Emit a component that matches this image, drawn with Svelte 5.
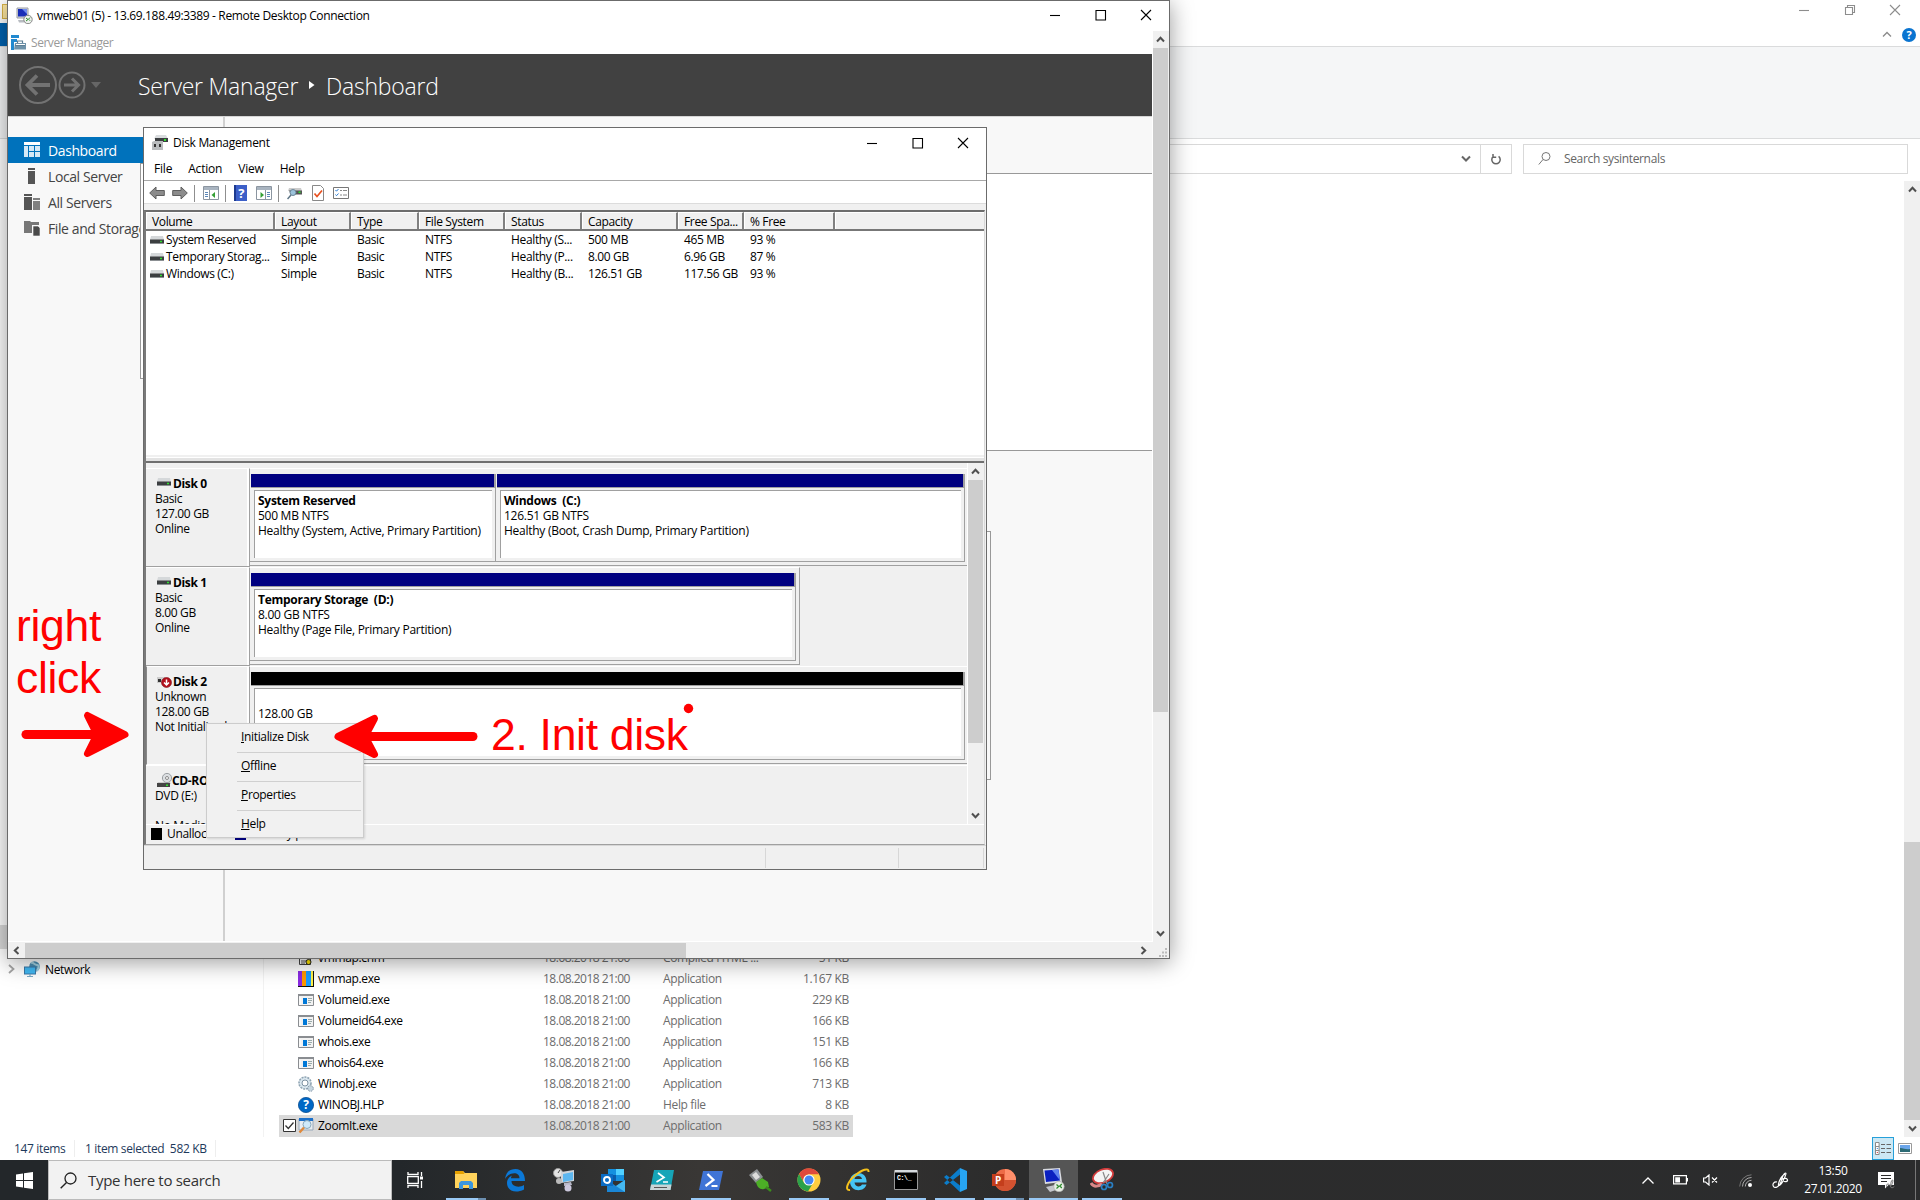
<script>
  const sideItems = ['Dashboard', 'Local Server', 'All Servers', 'File and Storage'];
  const columns = ['Volume', 'Layout', 'Type', 'File System', 'Status', 'Capacity', 'Free Spa...', '% Free', ''];
  const volumes = [
    ['System Reserved', 'Simple', 'Basic', 'NTFS', 'Healthy (S...', '500 MB', '465 MB', '93 %'],
    ['Temporary Storag...', 'Simple', 'Basic', 'NTFS', 'Healthy (P...', '8.00 GB', '6.96 GB', '87 %'],
    ['Windows (C:)', 'Simple', 'Basic', 'NTFS', 'Healthy (B...', '126.51 GB', '117.56 GB', '93 %'],
  ];
  const disks = [
    {
      name: 'Disk 0', icon: 'disk', lines: ['Basic', '127.00 GB', 'Online'],
      parts: [
        { w: 246, title: 'System Reserved', lines: ['500 MB NTFS', 'Healthy (System, Active, Primary Partition)'] },
        { w: 469, title: 'Windows\u00a0 (C:)', lines: ['126.51 GB NTFS', 'Healthy (Boot, Crash Dump, Primary Partition)'] },
      ],
    },
    {
      name: 'Disk 1', icon: 'disk', lines: ['Basic', '8.00 GB', 'Online'], short: true,
      parts: [{ w: 546, title: 'Temporary Storage\u00a0 (D:)', lines: ['8.00 GB NTFS', 'Healthy (Page File, Primary Partition)'] }],
    },
    {
      name: 'Disk 2', icon: 'offline', lines: ['Unknown', '128.00 GB', 'Not Initialized'], selected: true,
      parts: [{ w: 715, title: '\u00a0', lines: ['128.00 GB'], black: true }],
    },
  ];
  const menuItems = ['Initialize Disk', 'Offline', 'Properties', 'Help'];
  const files = [
    ['chm', 'vmmap.chm', 'Compiled HTML ...', '51 KB'],
    ['vmmap', 'vmmap.exe', 'Application', '1.167 KB'],
    ['app', 'Volumeid.exe', 'Application', '229 KB'],
    ['app', 'Volumeid64.exe', 'Application', '166 KB'],
    ['app', 'whois.exe', 'Application', '151 KB'],
    ['app', 'whois64.exe', 'Application', '166 KB'],
    ['gear', 'Winobj.exe', 'Application', '713 KB'],
    ['help', 'WINOBJ.HLP', 'Help file', '8 KB'],
    ['zoom', 'ZoomIt.exe', 'Application', '583 KB'],
  ];
  const tasks = [
    { id: 'explorer', run: 'multi' }, { id: 'edge' }, { id: 'putty' }, { id: 'outlook' }, { id: 'ise' },
    { id: 'ps', run: 'one' }, { id: 'plug' }, { id: 'chrome', run: 'one' }, { id: 'ie' },
    { id: 'cmd', run: 'one' }, { id: 'code', run: 'one' }, { id: 'ppt', run: 'multi' },
    { id: 'rdp', run: 'active' }, { id: 'snip', run: 'one' },
  ];
</script>

{#snippet chev(dir)}
  <svg class="chev {dir}" viewBox="0 0 9 7" width="9" height="7"><path d="M1 5.5 4.5 1.8 8 5.5" fill="none" stroke="#505050" stroke-width="2" /></svg>
{/snippet}

{#snippet winButtons(cls)}
  <div class="winbtns {cls}">
    <svg width="12" height="12" viewBox="0 0 12 12"><path d="M1 6.5h10" /></svg>
    {#if cls === 'dim'}
      <svg width="12" height="12" viewBox="0 0 12 12"><path d="M1.5 3.5h7v7h-7zM3.500 3.500v-2h7v7h-2" /></svg>
    {:else}
      <svg width="12" height="12" viewBox="0 0 12 12"><path d="M1 1.500h9.500v9.500h-9.500z" /></svg>
    {/if}
    <svg width="12" height="12" viewBox="0 0 12 12"><path d="M1 1l10 10M11 1L1 11" /></svg>
  </div>
{/snippet}

{#snippet diskIcon()}
  <svg width="14" height="8" viewBox="0 0 14 8"><path d="M1 0h12l1 4H0z" fill="#d5d8da" /><path d="M0 3.500h14V8H0z" fill="#3c3f41" /><path d="M0 7h14v1H0z" fill="#8b8f92" /><path d="M10 4.700h2v1.600h-2z" fill="#2fe02f" /></svg>
{/snippet}

<div class="desktop">
  <!-- File Explorer -->
  <section class="explorer">
    <div class="ex-title"><span class="folder"></span>{@render winButtons('dim')}</div>
    <div class="ex-tabs">
      <span class="file-tab"></span>
      <svg class="collapse" width="10" height="7" viewBox="0 0 10 7"><path d="M1 5.500l4-4 4 4" fill="none" stroke="#8a8a8a" stroke-width="1.300" /></svg>
      <span class="helpdot">?</span>
    </div>
    <div class="ribbon"></div>
    <div class="addrbar">
      <div class="addr">
        <svg class="drop" width="10" height="8" viewBox="0 0 10 8"><path d="M1 1.500l4 4 4-4" fill="none" stroke="#666" stroke-width="2" /></svg>
        <span class="refresh"><svg width="12" height="13" viewBox="0 0 12 13"><path d="M8.600 3.300A4.200 4.200 0 1 1 3.400 3.300M3 1v3.200h3.200" fill="none" stroke="#666" stroke-width="1.500" /></svg></span>
      </div>
      <div class="search">
        <svg width="14" height="15" viewBox="0 0 14 15"><circle cx="8" cy="5.500" r="4" fill="none" stroke="#777" /><path d="M5 8.500L.8 13.500" stroke="#777" /></svg>
        <span>Search sysinternals</span>
      </div>
    </div>
    <div class="ex-body">
      <nav class="tree">
        <div class="tree-sel"></div>
        <div class="net">
          <svg width="7" height="10" viewBox="0 0 7 10"><path d="M1 1l4.500 4L1 9" fill="none" stroke="#a5a5a5" stroke-width="1.800" /></svg>
          <svg class="neticon" width="16" height="16" viewBox="0 0 16 16"><circle cx="10.500" cy="5.500" r="5.300" fill="#4c8fb4" /><path d="M7 2c3-1 3 2 6 2s1 4 0 6" stroke="#a7d3e2" stroke-width="2" fill="none" /><path d="M0 5.500h12v8H0z" fill="#3b79a8" /><path d="M1 6.500h10v6H1z" fill="#42baf5" /><path d="M3 15.500h6M6 13v2" stroke="#7aa9c4" stroke-width="1.200" /></svg>
          <span>Network</span>
        </div>
      </nav>
      <div class="files">
        {#each files as [icon, name, type, size], i}
          <div class="file" class:sel={i === 8}>
            <span class="check">
              {#if i === 8}<svg width="13" height="13" viewBox="0 0 13 13"><path d="M.5.5h12v12H.5z" fill="#fff" stroke="#333" /><path d="M2.500 6.500l2.800 3L10.500 3.500" fill="none" stroke="#333" stroke-width="1.300" /></svg>{/if}
            </span>
            <svg class="ficon" width="16" height="16" viewBox="0 0 16 16">
              {#if icon === 'vmmap'}
                <path d="M0 0h16v16H0z" fill="#111" /><path d="M0 0h4v15H0z" fill="#8a2be2" /><path d="M4 0h4v15H4z" fill="#ff9800" /><path d="M8 0h5v15H8z" fill="#1a9cff" /><path d="M13 0h2v15h-2z" fill="#fff34a" />
              {:else if icon === 'app'}
                <path d="M.5 2.500h15v11H.5z" fill="#f2f2f2" stroke="#8a8d91" /><path d="M0 2h16v2H0z" fill="#8a8d91" /><path d="M5 6h4v6H5z" fill="#0078d7" /><path d="M10 6.500h4M10 8.500h4M10 10.500h3" stroke="#9aa" /><path d="M2 5v8" stroke="#fff" />
              {:else if icon === 'gear'}
                <circle cx="7" cy="7" r="6" fill="#d9e6ee" stroke="#8ea3b2" stroke-width="1.600" stroke-dasharray="2 1" /><circle cx="7" cy="7" r="3" fill="#fff" stroke="#7f93a3" /><circle cx="12.500" cy="12.500" r="2.800" fill="#c7d6e0" stroke="#7f93a3" stroke-dasharray="1.500 1" />
              {:else if icon === 'help'}
                <circle cx="8" cy="8" r="7.600" fill="#0067c5" stroke="#0a4f93" stroke-width=".8" /><text x="8" y="12.200" text-anchor="middle" font-size="12" font-weight="700" fill="#fff">?</text>
              {:else if icon === 'zoom'}
                <path d="M1 1h14v11H1z" fill="#e9eef2" stroke="#9ab" /><path d="M1 0h14v3H1z" fill="#1d70c9" /><circle cx="9" cy="6.500" r="4" fill="#cfeafa" stroke="#8aa9bb" /><path d="M6 9.500L1.500 14.500" stroke="#e08a3c" stroke-width="2.400" />
              {:else}
                <path d="M1.500.5h11v14h-11z" fill="#fff" stroke="#444" /><path d="M3 11h5M3 13h4" stroke="#555" /><circle cx="10.500" cy="12" r="2.500" fill="#ffe600" stroke="#222" />
              {/if}
            </svg>
            <span class="fname">{name}</span>
            <span class="fdate">18.08.2018 21:00</span>
            <span class="ftype">{type}</span>
            <span class="fsize">{size}</span>
          </div>
        {/each}
      </div>
      <div class="vscroll ex-scroll">
        <span class="sbtn">{@render chev('up')}</span>
        <span class="track-top"></span>
        <span class="thumb"></span>
        <span class="sbtn">{@render chev('down')}</span>
      </div>
    </div>
    <footer class="ex-status">
      <span class="cnt">147 items</span>
      <span class="selcnt">1 item selected&nbsp; 582 KB</span>
      <span class="views">
        <span class="view-on"><svg width="16" height="13" viewBox="0 0 16 13"><path d="M.5.5h3.600v12H.5zM.5 4.500h3.600M.5 8.500h3.600" fill="#fff" stroke="#8a8a8a" /><path d="M6 2.500h4m1.500 0H16M6 6.500h4m1.500 0H16M6 10.500h4m1.500 0H16" stroke="#666" /><path d="M1.800 6h1v1h-1z" fill="#2b7cd3" /><path d="M1.800 10h1v1h-1z" fill="#c22" /></svg></span>
        <svg class="view-off" width="14" height="11" viewBox="0 0 14 11"><path d="M.5.500h13v10H.500z" fill="#fff" stroke="#9a9a9a" /><path d="M2 2h10v7H2z" fill="#6ba5ea" /><path d="M2 5c4 0 6 2 10 1v3H2z" fill="#2c6a74" /></svg>
      </span>
    </footer>
  </section>

  <!-- Remote Desktop window -->
  <section class="rdp">
    <header class="rdp-title">
      <svg width="17" height="17" viewBox="0 0 17 17"><path d="M1 1h11v10H1z" fill="#d8dbe0" stroke="#9a9da3" /><path d="M2 2h9v7.500H2z" fill="#1a2fb8" /><path d="M6 2h5v5z" fill="#6f8cf0" /><path d="M2 13h8v2.500H3z" fill="#b8bcc2" /><circle cx="12" cy="12.500" r="4.200" fill="#eef2ee" stroke="#888" /><path d="M10 11l2 1.500-2 1.500M14 10.500l-1.500 1.700 1.500 1.500" stroke="#2c8a2c" fill="none" /></svg>
      <span>vmweb01 (5) - 13.69.188.49:3389 - Remote Desktop Connection</span>
      {@render winButtons('')}
    </header>
    <div class="rdp-mid">
      <div class="remote">
        <div class="sm-title">
          <svg width="15" height="15" viewBox="0 0 15 15"><path d="M0 0h8v3H0zM0 4h6v3H3v8H0z" fill="#2189cf" /><path d="M4 8h11v6.500H3z" fill="#6f93aa" /><path d="M6.500 8V6h5v2M4 10.500h10" fill="none" stroke="#5c7e94" stroke-width="1.200" /><path d="M5 9.500h9" stroke="#fff" /></svg>
          <span>Server Manager</span>
        </div>
        <div class="sm-head">
          <svg class="nav" width="86" height="40" viewBox="0 0 86 40">
            <g fill="none" stroke="#727272"><circle cx="20" cy="20" r="18" stroke-width="2" /><circle cx="54" cy="20" r="12.500" stroke-width="2" /><path d="M32 20H10M19 10.500L9.500 20l9.500 9.500" stroke-width="3.800" /><path d="M46 20h14M54 13.500l6.500 6.500-6.500 6.500" stroke-width="3" /></g><path d="M73 17h10l-5 6z" fill="#666" />
          </svg>
          <span class="crumb">Server Manager</span>
          <svg class="tri" width="6" height="8" viewBox="0 0 6 8"><path d="M0 0l5.500 4L0 8z" fill="#fff" /></svg>
          <span class="crumb">Dashboard</span>
        </div>
        <div class="sm-body">
          <aside>
            {#each sideItems as item, i}
              <div class="side" class:on={i === 0}>
                <svg width="16" height="16" viewBox="0 0 16 16">
                  {#if i === 0}
                    <path d="M0 0h16v3H0z" fill="#fff" /><path d="M0 4h4v11H0zM5 4h5v5H5zM11 4h5v5h-5zM5 10h5v5H5zM11 10h5v5h-5z" fill="#d6e9f6" />
                  {:else if i === 1}
                    <path d="M4 0h7v2H4zM4 3h7v13H4z" fill="#555" />
                  {:else if i === 2}
                    <path d="M0 0h8v2H0zM0 3h8v13H0z" fill="#555" /><path d="M9 4h7v2H9zM9 7h7v9H9z" fill="#808080" />
                  {:else}
                    <path d="M0 1h6l1 1h8v3H8v8H0z" fill="#777" /><path d="M9 6h5l2 2v8H9z" fill="#4a4a4a" stroke="#f8f8f8" stroke-width=".6" />
                  {/if}
                </svg>
                <span>{item}</span>
              </div>
            {/each}
          </aside>
          <div class="sm-main">
            <div class="sm-band"></div>
            <div class="sm-white"></div>
            <div class="sm-rest"></div>
          </div>
          <div class="tile left"></div>
          <div class="tile right"></div>
        </div>
      </div>
      <div class="vscroll rdp-v">
        <span class="sbtn">{@render chev('up')}</span>
        <span class="thumb"></span>
        <span class="rest"></span>
        <span class="sbtn">{@render chev('down')}</span>
      </div>
    </div>
    <div class="hscroll">
      <span class="sbtn">{@render chev('lt')}</span>
      <span class="thumb"></span>
      <span class="rest"></span>
      <span class="sbtn">{@render chev('rt')}</span>
      <svg class="grip" width="10" height="10" viewBox="0 0 10 10"><path d="M7 0h2v2H7zM4 3.500h2v2H4zM7 3.500h2v2H7zM1 7h2v2H1zM4 7h2v2H4zM7 7h2v2H7z" fill="#bbb" /></svg>
    </div>
  </section>

  <!-- Disk Management window -->
  <section class="dm">
    <header class="dm-title">
      <svg width="16" height="15" viewBox="0 0 16 15"><path d="M4 0h10l2 4H2z" fill="#d9dcde" /><path d="M3 3h13v4H3z" fill="#3c3f41" /><path d="M12 4h2v2h-2z" fill="#2fe02f" /><path d="M0 7l2-1h9v9H0z" fill="#b9bcbe" /><path d="M2 9h2v3H2zM7 9h2v3H7z" fill="#333" /></svg>
      <span>Disk Management</span>
      {@render winButtons('')}
    </header>
    <div class="menubar"><span>File</span><span>Action</span><span>View</span><span>Help</span></div>
    <div class="toolbar">
      <svg width="16" height="14" viewBox="0 0 16 14"><path d="M.7 7L7 1v3.500h8.300v5H7V13z" fill="#8c8c8c" stroke="#5e5e5e" /></svg>
      <svg class="g1" width="16" height="14" viewBox="0 0 16 14"><path d="M15.300 7L9 1v3.500H.7v5H9V13z" fill="#8c8c8c" stroke="#5e5e5e" /></svg>
      <i></i>
      <svg width="16" height="14" viewBox="0 0 16 14"><path d="M.5.5h15v13H.5z" fill="#fff" stroke="#8b95a0" /><path d="M1 1h14v3H1z" fill="#a9b4c0" /><path d="M2 6.500h3M2 8.500h3M2 10.500h3" stroke="#5b87b8" /><path d="M6.500 4v9" stroke="#8b95a0" /><path d="M12 6v6L8.500 9z" fill="#35a035" /></svg>
      <i></i>
      <svg width="13" height="16" viewBox="0 0 13 16"><path d="M0 0h13v16H0z" fill="#3c5fc8" /><path d="M0 0h2v16H0z" fill="#1d3a8f" /><text x="7.300" y="12.500" text-anchor="middle" font-size="13" font-weight="700" fill="#fff">?</text></svg>
      <svg class="g2" width="16" height="14" viewBox="0 0 16 14"><path d="M.5.5h15v13H.5z" fill="#fff" stroke="#8b95a0" /><path d="M1 1h14v3H1z" fill="#a9b4c0" /><path d="M11 6.500h3M11 8.500h3M11 10.500h3" stroke="#5b87b8" /><path d="M9.500 4v9" stroke="#8b95a0" /><path d="M4.500 6v6L8 9z" fill="#35a035" /></svg>
      <i></i>
      <svg width="15" height="13" viewBox="0 0 15 13"><path d="M2 1h12l1 3H1z" fill="#ccc" /><path d="M2 3.500h13v4H4z" fill="#555" /><path d="M11.500 4.500h2V6h-2z" fill="#2fe02f" /><circle cx="6" cy="5.500" r="3" fill="#9cc3dc" stroke="#6d8798" /><path d="M4 8L.5 12" stroke="#5d7485" stroke-width="1.500" /></svg>
      <svg class="g3" width="12" height="16" viewBox="0 0 12 16"><path d="M.5.500h8l3 3v12H.5z" fill="#fff" stroke="#888" /><path d="M2.500 8.500l2.500 3 5-6" fill="none" stroke="#e8501f" stroke-width="1.700" /></svg>
      <svg class="g4" width="16" height="12" viewBox="0 0 16 12"><path d="M.5.5h15v11H.5z" fill="#fff" stroke="#777" /><path d="M2.500 3l1 1.200L5.500 2M2.500 7.500l1 1.200L5.500 6.500" fill="none" stroke="#2b7cd3" /><path d="M7 3.500h2m1 0h4M7 8h2m1 0h4" stroke="#888" /></svg>
    </div>
    <div class="panel">
      <div class="cols head">{#each columns as c}<span>{c}</span>{/each}</div>
      <div class="list">
        {#each volumes as row}
          <div class="cols row">
            {#each row as cell, i}<span>{#if i === 0}{@render diskIcon()}{/if}{cell}</span>{/each}
          </div>
        {/each}
      </div>
      <div class="splitter"></div>
      <div class="disks">
        <div class="rows">
          {#each disks as d}
            <div class="disk">
              <div class="label" class:selected={d.selected}>
                <b>
                  {#if d.icon === 'disk'}<span class="di">{@render diskIcon()}</span>
                  {:else}<svg class="off" width="15" height="12" viewBox="0 0 15 12"><path d="M0 1h8v6H0z" fill="#ccc" /><path d="M1 3h3v3H1z" fill="#333" /><circle cx="9.500" cy="6.500" r="5" fill="#b3101c" stroke="#7d0a12" stroke-width=".6" /><path d="M9.500 3.500v5M7 6.500l2.500 2.500L12 6.500" stroke="#fff" stroke-width="1.500" fill="none" /></svg>{/if}{d.name}
                </b>
                {#each d.lines as l}<span>{l}</span>{/each}
              </div>
              <div class="parts" class:short={d.short}>
                {#each d.parts as p}
                  <div class="part" style:width="{p.w}px">
                    <div class="bar" class:black={p.black}></div>
                    <div class="box"><b>{p.title}</b>{#each p.lines as l}<span>{l}</span>{/each}</div>
                  </div>
                {/each}
              </div>
            </div>
          {/each}
          <div class="disk cd">
            <div class="label">
              <b><svg width="15" height="15" viewBox="0 0 15 15"><path d="M1 9h12l1 2H0z" fill="#ccc" /><path d="M0 10h13v4H0z" fill="#444" /><path d="M9 11.500h2V13H9z" fill="#2fe02f" /><circle cx="10" cy="5" r="4.600" fill="#dcdfe2" stroke="#9a9ea2" /><circle cx="10" cy="5" r="1.500" fill="#fff" stroke="#888" /></svg>CD-ROM 0</b>
              <span>DVD (E:)</span><span>&nbsp;</span><span>No Media</span>
            </div>
            <div class="parts cdp"></div>
          </div>
        </div>
        <div class="vscroll dm-v">
          <span class="sbtn">{@render chev('up')}</span>
          <span class="thumb"></span>
          <span class="rest"></span>
          <span class="sbtn">{@render chev('down')}</span>
        </div>
      </div>
      <div class="legend"><i class="blk"></i><span>Unallocated</span><i class="nvy"></i><span>Primary partition</span></div>
    </div>
    <footer class="dm-status"><span></span><span></span><span></span></footer>
  </section>

  <div class="ctx">
    {#each menuItems as m}<div class="mi"><u>{m[0]}</u>{m.slice(1)}</div>{/each}
  </div>

  <!-- Freehand annotations -->
  <svg class="notes" width="720" height="220" viewBox="0 600 720 220">
    <g fill="#f00" stroke="#f00" stroke-width="7" stroke-linejoin="round" stroke-linecap="round">
      <path d="M26 734.500h70" stroke-width="9" /><path d="M125 734.500L87.500 715.500L97 734.500L87.500 753.500z" />
      <path d="M473 736.500h-70" stroke-width="9" /><path d="M338 736.500L374.500 718.500L365 736.500L374.500 754.500z" /><path d="M365 736.500h40" stroke-width="9" />
    </g>
    <circle cx="688.500" cy="708.500" r="4.700" fill="#f00" />
    <g class="ink"><text x="16" y="641">right</text><text x="16" y="693">click</text><text x="491" y="750">2. Init disk</text></g>
  </svg>

  <!-- Taskbar -->
  <footer class="taskbar">
    <span class="start"><svg width="17" height="17" viewBox="0 0 17 17"><path d="M0 2.400l7-1V8H0zM8 1.300l9-1.300v8H8zM0 9h7v6.600l-7-1zM8 9h9v8l-9-1.300z" fill="#fff" /></svg></span>
    <div class="tb-search">
      <svg width="17" height="17" viewBox="0 0 17 17"><circle cx="10.500" cy="6.500" r="5.500" fill="none" stroke="#222" stroke-width="1.300" /><path d="M6.500 10.500L.7 16.300" stroke="#222" stroke-width="1.400" /></svg>
      <span>Type here to search</span>
    </div>
    <span class="tview"><svg width="17" height="16" viewBox="0 0 17 16"><path d="M1 0v2.500h10V0M1 16v-2.500h10V16M.7 4.700h10.600v6.600H.7zM14.500 0v4M14.500 9v7" fill="none" stroke="#fff" stroke-width="1.300" /><path d="M13 4.500h3v3h-3z" fill="#fff" /></svg></span>
    <div class="tasks">
      {#each tasks as t}
        <span class="task {t.run ?? ''}">
          <svg width="24" height="24" viewBox="0 0 24 24">
            {#if t.id === 'explorer'}
              <path d="M1 3h8l2 2h12v15H1z" fill="#ffd35c" /><path d="M1 3h8l1.500 3H1z" fill="#e6a100" /><path d="M5 20v-5l2-2h10l2 2v6h-4v-4H9v4H5z" fill="#3b96dd" />
            {:else if t.id === 'edge'}
              <path d="M2 11C3 4 7 1 12.500 1 19 1 22 6 22 13H8.500c0 6 8 7 12.500 4v4.500C12 26 4 22.500 4 15c0-3.500 2-6 5-7.500C8 9 8 9.700 8 10.300h8.500C16.500 3 6 4 2 11z" fill="#0b78d7" />
            {:else if t.id === 'putty'}
              <circle cx="6" cy="5" r="4.500" fill="#e4e4e4" stroke="#999" /><path d="M6 5l2-3" stroke="#444" /><path d="M9 4l13-2v11l-13 2z" fill="#cfd4da" /><path d="M11 6l10-2v8l-10 2z" fill="#5db7f0" /><path d="M12 15l7-1 1 3-8 1z" fill="#b8b8c8" /><circle cx="16" cy="20" r="3.500" fill="#ccc8dd" /><circle cx="7" cy="13" r="3" fill="#bbb" />
            {:else if t.id === 'outlook'}
              <path d="M7 1h16v12H7z" fill="#1490df" /><path d="M15 1h8v6h-8z" fill="#50d0ff" /><path d="M7 7h8v6H7z" fill="#0a5aa8" /><path d="M6 12l9 6 9-6v12H6z" fill="#1a86d6" /><path d="M24 12l-9 6 9 6z" fill="#45b8f0" /><path d="M0 6h12v12H0z" fill="#0b6cc4" /><circle cx="6" cy="12" r="3" fill="none" stroke="#fff" stroke-width="1.900" />
            {:else if t.id === 'ise'}
              <path d="M4 2h20l-3.500 20H0z" fill="#16a5b8" /><path d="M1 16.500h20.500l-1 5.500H0z" fill="#c8d4d6" /><path d="M8 5l6 4.500L6.500 14M13 14h5" fill="none" stroke="#fff" stroke-width="1.700" /><path d="M4 19.500h13" stroke="#555" />
            {:else if t.id === 'ps'}
              <path d="M4 3h20l-4 19H0z" fill="#3f74d6" /><path d="M8.500 6l6 6-8 6M12.500 18h6" fill="none" stroke="#fff" stroke-width="2.200" />
            {:else if t.id === 'plug'}
              <path d="M1 7l8-6 6 8-7 6z" fill="#8d9194" /><path d="M4 7l4-3 4 5-4 3z" fill="#ddd" /><path d="M8 14l6-4 6 4 1 5-5 2c-4 1-7-2-8-7z" fill="#4caf26" /><path d="M18 19l5 4" stroke="#3b8d1c" stroke-width="2.500" />
            {:else if t.id === 'chrome'}
              <circle cx="12" cy="12" r="11.500" fill="#ffcd40" /><path d="M2 6A11.500 11.500 0 0 1 22 6.300H12a6 6 0 0 0-5.500 8z" fill="#df4a3c" /><path d="M2 6A11.500 11.500 0 0 0 11 23.400l5-8.500a6 6 0 0 1-9.200-.5z" fill="#2ba14b" /><circle cx="12" cy="12" r="5.600" fill="#fff" /><circle cx="12" cy="12" r="4.500" fill="#4587f3" />
            {:else if t.id === 'ie'}
              <path d="M20.500 14.500H8.500c.5 4.500 6 5 7.500 2h4.500C18 25 4 24 4 13.500 4 2 21.500 2 20.500 14.500zM8.500 11H16c-.5-4-7-4-7.500 0z" fill="#45c4f5" /><path d="M4 22c-6 1-2-9 5-14.500S23-1 22.500 4" fill="none" stroke="#f6c21c" stroke-width="2" />
            {:else if t.id === 'cmd'}
              <path d="M.5 2.500h23v19H.5z" fill="#000" stroke="#999" /><path d="M1 2h22v2.500H1z" fill="#d5d9dd" /><text x="3" y="12" font-size="6.500" font-weight="700" fill="#fff" class="mono">C:\_</text>
            {:else if t.id === 'code'}
              <path d="M17 0l7 3v18l-7 3z" fill="#27a4f2" /><path d="M17 0L1 15l2.500 2L17 6.500zM17 24L1 9l2.500-2L17 17.500z" fill="#0b7dcb" />
            {:else if t.id === 'ppt'}
              <circle cx="13" cy="12" r="11" fill="#ed6c47" /><path d="M13 1a11 11 0 0 1 11 11H13z" fill="#ff8f6b" /><path d="M24 12a11 11 0 0 1-22 0z" fill="#d35230" /><path d="M0 6h12v12H0z" fill="#c43e1c" /><text x="6" y="15.500" text-anchor="middle" font-size="10" font-weight="700" fill="#fff">P</text>
            {:else if t.id === 'rdp'}
              <path d="M2 1l17-1 2 14-17 2z" fill="#d9dbe2" /><path d="M3.500 2.500l14-1 1.500 11-14 1.500z" fill="#0a1fc0" /><path d="M11 2l6.500-.5 1.500 11z" fill="#5f83ee" /><path d="M5 19l9-2 4 4-9 3z" fill="#c4c6cc" /><circle cx="18" cy="18.500" r="5.200" fill="#e8eee6" stroke="#aaa" stroke-width=".6" /><path d="M15.500 16.500l2.200 2-2.200 2M20.800 16l-2 2 2 2" fill="none" stroke="#2c8a2c" stroke-width="1.200" />
            {:else}
              <ellipse cx="13" cy="8" rx="10.500" ry="6.500" transform="rotate(-22 13 8)" fill="#f4f4f4" stroke="#d23b3b" stroke-width="1.800" /><path d="M1 15c3 5 8 3 11 1" stroke="#d98888" stroke-width="3" fill="none" /><path d="M13 4l4 12M19 6l-6 9" stroke="#888" stroke-width="1.200" /><circle cx="14" cy="19" r="2.500" fill="none" stroke="#2a7fc4" stroke-width="1.700" /><circle cx="20" cy="17" r="2.500" fill="none" stroke="#2a7fc4" stroke-width="1.700" />
            {/if}
          </svg>
        </span>
      {/each}
    </div>
    <div class="tray">
      <svg width="12" height="7" viewBox="0 0 12 7"><path d="M.5 6.500L6 1l5.500 5.500" fill="none" stroke="#fff" stroke-width="1.300" /></svg>
      <svg class="bat" width="15" height="10" viewBox="0 0 15 10"><path d="M.6.6h12.800v8.300H.6z" fill="none" stroke="#fff" stroke-width="1.200" /><path d="M2.200 2.200h4.800v5.200H2.200zM13.800 3h1.200v3.500h-1.200z" fill="#fff" /></svg>
      <svg class="vol" width="15" height="12" viewBox="0 0 15 12"><path d="M.6 4h2L6 1v10L2.600 8h-2zM9 3.500l5 5M14 3.500l-5 5" fill="none" stroke="#fff" stroke-width="1.200" /></svg>
      <svg class="wifi" width="13" height="13" viewBox="0 0 13 13"><g fill="none" stroke="#aaa"><path d="M.7 12.500A12 12 0 0 1 12.500.8" stroke="#777" /><path d="M3.500 12.500a9 9 0 0 1 9-9M6.300 12.500a6.200 6.200 0 0 1 6.200-6.200" /></g><circle cx="11" cy="11" r="2" fill="#fff" /></svg>
      <svg class="pen" width="17" height="17" viewBox="0 0 17 17"><path d="M5 10c-3-.5-5 2-3.500 4.500S8 14 9 10s3-9 4.500-9S12 7 10.500 10 6 15 6.500 12 10 2.500 13 2.500M9 8c3-3 7-1.500 6.500.5S12 9.500 12 9" fill="none" stroke="#fff" stroke-width="1.200" /></svg>
      <div class="clock"><span>13:50</span><span>27.01.2020</span></div>
      <svg class="note" width="17" height="17" viewBox="0 0 17 17"><path d="M0 0h16v13h-5.500L7 16.500V13H0z" fill="#fff" /><path d="M3 3.500h10M3 6.500h10M3 9.500h6" stroke="#2b2b2b" stroke-width="1.100" /><path d="M9 15c-2-3 2-4 3-1.500S16 8 14.500 8s-2.500 7-1.500 7.500 3 0 3-1" fill="none" stroke="#777" /></svg>
      <i class="peek"></i>
    </div>
  </footer>
</div>

<style>
  :global(body) { margin: 0; overflow: hidden; }
  * { box-sizing: border-box; }
  svg { display: block; flex: none; }
  .desktop { position: relative; width: 1920px; height: 1200px; overflow: hidden; background: #fff; font-family: 'Open Sans', 'Noto Sans', sans-serif; font-size: 12px; letter-spacing: -0.35px; color: #000; white-space: nowrap; }

  /* shared parts */
  .winbtns { display: flex; gap: 33.500px; margin-left: auto; }
  .winbtns path { fill: none; stroke: #000; stroke-width: 1.1; }
  .winbtns.dim path { stroke: #8d8d8d; }
  .vscroll { display: flex; flex-direction: column; background: #f0f0f0; }
  .sbtn { display: flex; align-items: center; justify-content: center; width: 17px; height: 17px; flex: none; }
  .thumb { background: #cdcdcd; flex: none; }
  .rest { flex: 1; }
  .chev.down { transform: rotate(180deg); }
  .chev.lt { transform: rotate(-90deg); }
  .chev.rt { transform: rotate(90deg); }

  /* explorer */
  .explorer { display: flex; flex-direction: column; height: 1160px; }
  .ex-title { display: flex; height: 23px; padding: 4px 19px 0 2px; }
  .folder { width: 16px; height: 15px; background: #ffe9a2; border: 1px solid #d9b44a; }
  .ex-tabs { display: flex; align-items: center; height: 24px; border-bottom: 1px solid #dadbdc; padding-right: 4px; }
  .file-tab { width: 60px; height: 23px; background: #0063b1; margin-right: auto; }
  .collapse { margin-right: 10px; }
  .helpdot { width: 14px; height: 14px; border-radius: 50%; background: #0a74d0; color: #fff; font-weight: 700; font-size: 11px; line-height: 14px; text-align: center; }
  .ribbon { height: 92px; background: #f5f6f7; border-bottom: 1px solid #dadbdc; }
  .addrbar { display: flex; gap: 11px; height: 42px; padding: 5px 12px 7px 10px; }
  .addr { display: flex; align-items: center; flex: 1; border: 1px solid #d9d9d9; }
  .drop { margin-left: auto; margin-right: 9px; }
  .refresh { display: flex; align-items: center; justify-content: center; width: 31px; height: 28px; border-left: 1px solid #d9d9d9; }
  .search { display: flex; align-items: center; gap: 12px; width: 385px; border: 1px solid #d9d9d9; padding: 0 0 1px 14px; color: #666; }
  .ex-body { display: flex; height: 956px; }
  .tree { width: 264px; border-right: 1px solid #f2f2f2; padding-top: 744px; flex: none; }
  .tree-sel { height: 24px; background: #d9d9d9; }
  .net { display: flex; align-items: center; height: 20px; margin-top: 10px; padding-left: 8px; }
  .neticon { margin: 0 5px 0 9px; }
  .files { flex: 1; display: flex; flex-direction: column; justify-content: flex-end; align-items: flex-start; padding-left: 15px; }
  .file { display: flex; align-items: center; width: 574px; height: 21px; color: #000; }
  .file.sel { background: #d9d9d9; height: 22px; padding-bottom: 1px; }
  .check { width: 19px; padding-left: 4px; flex: none; }
  .fname { width: 229px; padding-left: 4px; }
  .fdate, .ftype, .fsize { color: #6d6d6d; }
  .fdate { width: 120px; letter-spacing: -0.5px; }
  .ftype { width: 110px; }
  .fsize { flex: 1; text-align: right; padding-right: 4px; }
  .ex-scroll { width: 16px; }
  .track-top { flex: 1; }
  .ex-scroll .thumb { height: 278px; }
  .ex-status { display: flex; align-items: center; height: 23px; color: #1e395b; padding-left: 14px; }
  .cnt { width: 61px; border-right: 1px solid #eee; margin-right: 10px; }
  .selcnt { width: 131px; border-right: 1px solid #eee; }
  .views { display: flex; align-items: center; gap: 4px; margin-left: auto; padding-right: 8px; }
  .view-on { display: flex; align-items: center; justify-content: center; width: 22px; height: 23px; background: #cce8f4; border: 1px solid #26a0da; }

  /* remote desktop window */
  .rdp { position: absolute; left: 7px; top: 0; width: 1163px; height: 959px; border: 1px solid #6b6b6b; background: #fff; box-shadow: 0 3px 22px rgba(0, 0, 0, 0.4); display: flex; flex-direction: column; }
  .rdp-title { display: flex; align-items: center; height: 30px; padding: 0 17px 2px 8px; flex: none; }
  .rdp-title span { margin-left: 4px; }
  .rdp-mid { display: flex; height: 911px; }
  .remote { width: 1145px; border-right: 1px solid #fff; border-bottom: 1px solid #fff; display: flex; flex-direction: column; }
  .sm-title { display: flex; align-items: center; gap: 5px; height: 23px; padding-left: 3px; color: #999; letter-spacing: -0.45px; flex: none; }
  .sm-head { display: flex; align-items: center; height: 63px; background: #414141; border-bottom: 1px solid #d5d5d5; color: #fff; font-size: 23px; font-weight: 300; letter-spacing: -0.25px; padding-left: 10px; flex: none; }
  .sm-head .crumb { padding-top: 2px; }
  .nav { margin-right: 34px; }
  .tri { margin: 0 11px 0 11px; }
  .sm-body { position: relative; display: flex; flex: 1; background: #f8f8f8; }
  aside { width: 217px; border-right: 2px solid #d0d0d0; padding-top: 20px; }
  .side { display: flex; align-items: center; gap: 8px; height: 26px; padding-left: 16px; font-size: 14px; color: #444; letter-spacing: -0.4px; }
  .side.on { background: #0072bc; color: #fff; }
  .sm-main { flex: 1; display: flex; flex-direction: column; }
  .sm-band { height: 57px; border-bottom: 1px solid #999; }
  .sm-white { height: 277px; background: #fff; border-bottom: 1px solid #999; }
  .tile { position: absolute; border: 1px solid #999; background: #fff; }
  .tile.left { left: 132px; top: 46px; width: 40px; height: 216px; }
  .tile.right { left: 961px; top: 414px; width: 22px; height: 249px; background: #f8f8f8; }
  .rdp-v { width: 16px; }
  .rdp-v .sbtn { width: 15px; }
  .rdp-v .thumb { height: 664px; width: 15px; }
  .hscroll { display: flex; align-items: center; height: 16px; background: #f0f0f0; }
  .hscroll .thumb { width: 661px; height: 15px; }
  .hscroll .sbtn { height: 15px; }
  .grip { margin: 5px 1px 0 6px; }

  /* disk management */
  .dm { position: absolute; left: 143px; top: 127px; width: 844px; height: 743px; border: 1px solid #6b6b6b; background: #f0f0f0; display: flex; flex-direction: column; }
  .dm-title { display: flex; align-items: center; height: 31px; padding: 0 17px 2px 8px; background: #fff; flex: none; }
  .dm-title span { margin-left: 5px; letter-spacing: -0.3px; }
  .menubar { display: flex; gap: 16px; height: 22px; padding-left: 10px; line-height: 20px; background: #fff; border-bottom: 1px solid #a8a8a8; letter-spacing: -0.2px; flex: none; }
  .toolbar { display: flex; align-items: center; height: 23px; padding: 2px 0 0 5px; background: #fff; border-bottom: 1px solid #dcdcdc; flex: none; }
  .toolbar i { width: 1px; height: 17px; margin: 0 8px 0 6px; background: #8f8f8f; }
  .g1 { margin-left: 7px; }
  .g2 { margin-left: 9px; }
  .g3 { margin-left: 10px; }
  .g4 { margin-left: 9px; }
  .panel { margin: 6px 1px 0 0; width: 841px; height: 635px; border-left: 2px solid #7a7a7a; border-top: 2px solid #6c6c6c; border-right: 1px solid #d8d8d8; border-bottom: 1px solid #a0a0a0; display: flex; flex-direction: column; flex: none; }
  .cols { display: grid; grid-template-columns: 129px 76px 68px 86px 77px 96px 66px 91px 1fr; }
  .cols span { padding-left: 6px; overflow: hidden; }
  .head { height: 19px; border-bottom: 2px solid #777; flex: none; line-height: 17px; }
  .head span { border-right: 2px solid #808080; border-left: 1px solid #fff; border-top: 1px solid #fff; padding-left: 5px; }
  .head span:last-child { border-right: 0; }
  .list { height: 224px; background: #fff; flex: none; }
  .row { height: 17px; line-height: 17px; }
  .row span:first-child { display: flex; align-items: center; padding-left: 4px; gap: 2px; }
  .splitter { height: 8px; flex: none; border-top: 2px solid #f0f0f0; border-bottom: 2px solid #6f6f6f; background: #e3e3e3; box-shadow: inset 0 1px #fff; }
  .disks { display: flex; height: 361px; flex: none; letter-spacing: -0.27px; }
  .rows { width: 821px; padding-top: 5px; overflow: hidden; }
  .disk { display: flex; height: 99px; }
  .label { display: flex; flex-direction: column; width: 104px; padding: 7px 0 0 9px; border-top: 1px solid #fff; border-right: 1px solid #a0a0a0; border-bottom: 1px solid #a0a0a0; box-shadow: inset -2px 0 #fff; line-height: 15px; letter-spacing: -0.35px; flex: none; overflow: hidden; }
  .label.selected { border-left: 1px solid #888; padding-left: 8px; border-bottom-color: #fff; }
  .label b { display: flex; align-items: center; height: 15px; padding-left: 2px; gap: 2px; }
  .di { margin-top: -3px; }
  .off { margin-right: -1px; }
  .parts { display: flex; width: 717px; height: 98px; border-top: 1px solid #fff; border-bottom: 1px solid #a0a0a0; padding-top: 5px; }
  .parts.short { width: 550px; border-right: 1px solid #a0a0a0; }
  .part { height: 88px; border-right: 1px solid #a0a0a0; border-bottom: 1px solid #a0a0a0; padding-left: 1px; flex: none; }
  .bar { height: 14px; background: #000080; border-bottom: 1px solid #a0a0a0; border-right: 1px solid #a0a0a0; }
  .bar.black { background: #000; }
  .box { display: flex; flex-direction: column; height: 68px; margin: 2px 3px 0 3px; padding: 2px 0 0 3px; background: #fff; border-left: 1px solid #a0a0a0; border-top: 1px solid #a0a0a0; line-height: 15px; }
  .box b { min-height: 15px; }
  .cdp { border-bottom: 0; }
  .cd .label { border-right-color: #f0f0f0; }
  .cd .label b { gap: 0; }
  .dm-v { width: 17px; border-left: 1px solid #fff; }
  .dm-v .sbtn { width: 15px; }
  .dm-v .thumb { height: 263px; width: 15px; }
  .legend { display: flex; align-items: center; height: 19px; border-top: 1px solid #fff; padding: 0 0 1px 5px; flex: none; overflow: hidden; }
  .legend i { width: 11px; height: 12px; margin-right: 5px; }
  .legend span { width: 68px; }
  .legend span:last-child { width: auto; }
  .blk { background: #000; }
  .nvy { background: #000080; }
  .dm-status { display: flex; height: 24px; margin-top: auto; border-top: 1px solid #d7d7d7; padding-top: 2px; }
  .dm-status span { border-right: 1px solid #d7d7d7; height: 20px; }
  .dm-status span:nth-child(1) { width: 622px; }
  .dm-status span:nth-child(2) { width: 133px; }
  .dm-status span:nth-child(3) { width: 85px; }

  .ctx { position: absolute; left: 206px; top: 723px; width: 158px; height: 115px; border: 1px solid #ccc; background: #f1f1f1; padding: 0 2px 0 30px; box-shadow: 1px 1px 2px rgba(0, 0, 0, 0.12); }
  .mi { height: 29px; line-height: 25px; padding-left: 4px; }
  .mi:not(:last-child) { border-bottom: 1px solid #d0d0d0; }

  .notes { position: absolute; left: 0; top: 600px; }
  .ink { font-family: 'Liberation Sans', sans-serif; font-size: 44.500px; fill: #f00; letter-spacing: -0.3px; }

  /* taskbar */
  .taskbar { display: flex; height: 40px; background: linear-gradient(90deg, #23272a 0, #23272a 400px, #393735 700px, #2c2c2c 1000px, #2b2c2d 1920px); color: #fff; }
  .start { display: flex; align-items: center; justify-content: center; width: 48px; }
  .tb-search { display: flex; align-items: center; gap: 11px; width: 344px; padding-left: 11px; background: #f2f2f2; border: 1px solid #bbb; color: #333; font-size: 15px; letter-spacing: -0.3px; }
  .tview { display: flex; align-items: center; width: 50px; padding-left: 15px; }
  .tasks { display: flex; }
  .task { display: flex; align-items: center; justify-content: center; width: 48.900px; height: 40px; background-repeat: no-repeat; background-position: center bottom; background-size: 40px 2px; }
  .one { background-image: linear-gradient(#99c9f5, #99c9f5); }
  .multi { background-image: linear-gradient(90deg, #99c9f5 32px, #6c8fb0 32px); }
  .active { background-color: #555; background-image: linear-gradient(#99c9f5, #99c9f5); background-size: 100% 2px; }
  .mono { font-family: 'Liberation Mono', monospace; }
  .tray { display: flex; align-items: center; margin-left: auto; }
  .bat { margin-left: 19px; }
  .vol { margin-left: 15px; }
  .wifi { margin-left: 21px; }
  .pen { margin-left: 20px; }
  .clock { display: flex; flex-direction: column; align-items: center; width: 56px; line-height: 18px; margin: 0 17px 0 16px; }
  .peek { width: 1px; height: 40px; background: #777; margin: 0 4px 0 20px; }
</style>
